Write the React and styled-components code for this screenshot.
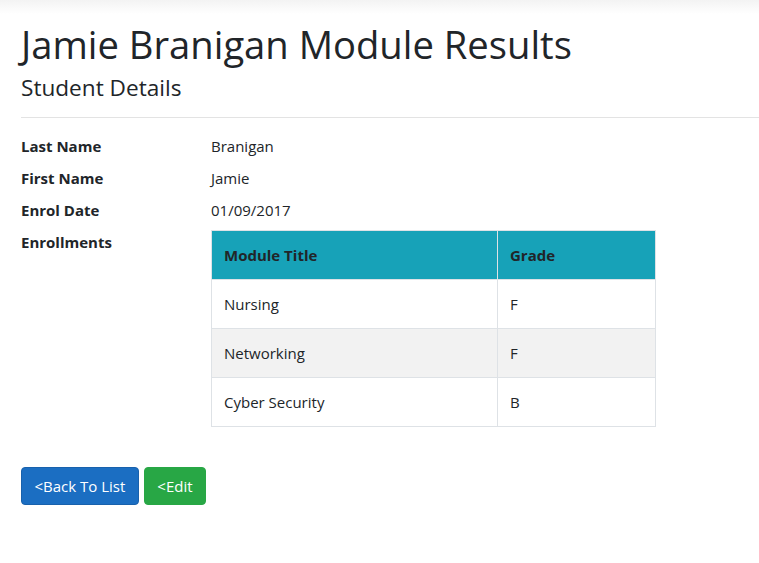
import React from "react";
import styled, { createGlobalStyle } from "styled-components";

const GlobalStyle = createGlobalStyle`
  body {
    margin: 0;
    background: #ffffff;
    font-family: "Open Sans", "Noto Sans", sans-serif;
    color: #212529;
  }
`;

const TopShade = styled.div`
  height: 14px;
  background: linear-gradient(#f3f3f3, #ffffff);
`;

const Page = styled.main`
  padding: 6px 0 40px 21px;
`;

const Title = styled.h1`
  margin: 0;
  font-size: 38.2px;
  font-weight: 400;
  line-height: 48px;
`;

const SubTitle = styled.h4`
  margin: 6px 0 0;
  font-size: 22.6px;
  font-weight: 400;
  line-height: 28px;
`;

const Rule = styled.hr`
  margin: 15px 0 16px;
  border: 0;
  border-top: 1px solid #e3e3e3;
`;

const DetailList = styled.dl`
  display: grid;
  grid-template-columns: 190px 445px;
  row-gap: 8px;
  margin: 0;
  font-size: 15px;
  line-height: 24px;
`;

const Term = styled.dt`
  font-weight: 700;
`;

const Value = styled.dd`
  margin: 0;
`;

const Table = styled.table`
  width: 445px;
  table-layout: fixed;
  border-collapse: collapse;
  margin-bottom: 16px;
`;

const HeadCell = styled.th`
  background: #17a2b8;
  border: 1px solid #dee2e6;
  padding: 12px;
  text-align: left;
  font-weight: 700;
  line-height: 24px;
  width: ${(p) => p.$width || "auto"};
`;

const Row = styled.tr`
  background: ${(p) => (p.$striped ? "#f2f2f2" : "#ffffff")};
`;

const Cell = styled.td`
  border: 1px solid #dee2e6;
  padding: 12px;
  line-height: 24px;
`;

const Actions = styled.div`
  display: flex;
  gap: 5px;
  margin-top: 24px;
`;

const Button = styled.a`
  display: inline-block;
  padding: 6px 12.5px;
  border-radius: 4px;
  font-size: 15px;
  line-height: 24px;
  color: #ffffff;
  text-decoration: none;
  background: ${(p) => p.$bg};
  border: 1px solid ${(p) => p.$border};
`;

const enrollments = [
  { title: "Nursing", grade: "F" },
  { title: "Networking", grade: "F" },
  { title: "Cyber Security", grade: "B" },
];

const App = () => {
  return (
    <>
      <GlobalStyle />
      <TopShade />
      <Page>
        <Title>Jamie Branigan Module Results</Title>
        <SubTitle>Student Details</SubTitle>
        <Rule />
        <DetailList>
          <Term>Last Name</Term>
          <Value>Branigan</Value>
          <Term>First Name</Term>
          <Value>Jamie</Value>
          <Term>Enrol Date</Term>
          <Value>01/09/2017</Value>
          <Term>Enrollments</Term>
          <Value>
            <Table>
              <thead>
                <tr>
                  <HeadCell $width="261px">Module Title</HeadCell>
                  <HeadCell>Grade</HeadCell>
                </tr>
              </thead>
              <tbody>
                {enrollments.map((item, index) => (
                  <Row key={item.title} $striped={index % 2 === 1}>
                    <Cell>{item.title}</Cell>
                    <Cell>{item.grade}</Cell>
                  </Row>
                ))}
              </tbody>
            </Table>
          </Value>
        </DetailList>
        <Actions>
          <Button href="#" $bg="#1b6ec2" $border="#1861ac">
            &lt;Back To List
          </Button>
          <Button href="#" $bg="#28a745" $border="#28a745">
            &lt;Edit
          </Button>
        </Actions>
      </Page>
    </>
  );
};

export default App;
